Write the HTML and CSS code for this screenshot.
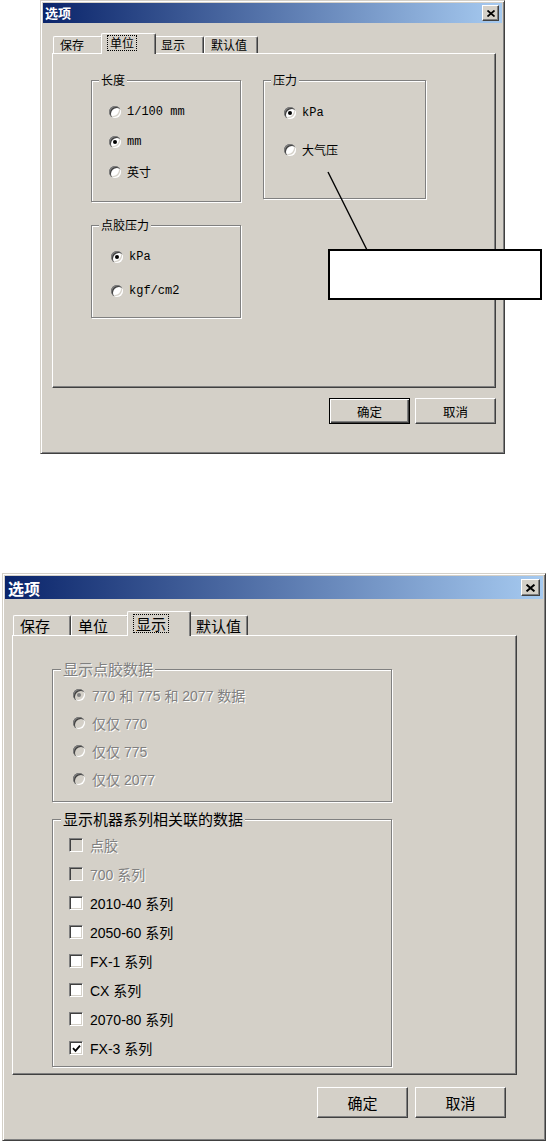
FILE: index.html
```html
<!DOCTYPE html>
<html lang="zh-CN">
  <head>
    <meta charset="UTF-8" />
    <meta name="viewport" content="width=device-width, initial-scale=1.0" />
    <title>选项</title>
    <link rel="stylesheet" href="styles.css">
  </head>
  <body>
    <main>
      <!-- first shot: units tab, with a blank callout -->
      <div class="figure">
        <div class="dialog dialog-small">
          <div class="titlebar">
            <span class="title">选项</span>
            <button class="close" aria-label="关闭">
              <svg viewBox="0 0 8 7" width="8" height="7"><path d="M0.5 0.5 L7.5 6.5 M7.5 0.5 L0.5 6.5" stroke="#000" stroke-width="1.7" fill="none"/></svg>
            </button>
          </div>
          <div class="dialog-body">
            <div class="tabs">
              <div class="tab">保存</div>
              <div class="tab tab-active"><span class="focus">单位</span></div>
              <div class="tab">显示</div>
              <div class="tab">默认值</div>
            </div>

            <div class="panel units-panel">
              <div class="group length-group">
                <div class="group-title">长度</div>
                <div class="options">
                  <label class="option"><span class="radio"></span>1/100 mm</label>
                  <label class="option"><span class="radio checked"></span>mm</label>
                  <label class="option"><span class="radio"></span>英寸</label>
                </div>
              </div>
              <div class="group pressure-group">
                <div class="group-title">压力</div>
                <div class="options">
                  <label class="option"><span class="radio checked"></span>kPa</label>
                  <label class="option"><span class="radio"></span>大气压</label>
                </div>
              </div>
              <div class="group glue-group">
                <div class="group-title">点胶压力</div>
                <div class="options">
                  <label class="option"><span class="radio checked"></span>kPa</label>
                  <label class="option"><span class="radio"></span>kgf/cm2</label>
                </div>
              </div>
            </div>

            <div class="buttons">
              <button class="btn btn-default">确定</button>
              <button class="btn">取消</button>
            </div>
          </div>
        </div>

        <svg class="callout-line" width="60" height="90" viewBox="0 0 60 90">
          <line x1="8" y1="7" x2="47" y2="85" stroke="#000" stroke-width="1.4"/>
        </svg>
        <div class="callout-box"></div>
      </div>

      <!-- second shot: display tab -->
      <div class="dialog dialog-large">
        <div class="titlebar">
          <span class="title">选项</span>
          <button class="close" aria-label="关闭">
            <svg viewBox="0 0 8 7" width="9" height="8"><path d="M0.5 0.5 L7.5 6.5 M7.5 0.5 L0.5 6.5" stroke="#000" stroke-width="1.7" fill="none"/></svg>
          </button>
        </div>
        <div class="dialog-body">
          <div class="tabs">
            <div class="tab">保存</div>
            <div class="tab">单位</div>
            <div class="tab tab-active"><span class="focus">显示</span></div>
            <div class="tab">默认值</div>
          </div>

          <div class="panel display-panel">
            <div class="group data-group">
              <div class="group-title disabled">显示点胶数据</div>
              <div class="options">
                <label class="option disabled"><span class="radio checked"></span>770 和 775 和 2077 数据</label>
                <label class="option disabled"><span class="radio"></span>仅仅 770</label>
                <label class="option disabled"><span class="radio"></span>仅仅 775</label>
                <label class="option disabled"><span class="radio"></span>仅仅 2077</label>
              </div>
            </div>
            <div class="group series-group">
              <div class="group-title">显示机器系列相关联的数据</div>
              <div class="options">
                <label class="option disabled"><span class="check"></span>点胶</label>
                <label class="option disabled"><span class="check"></span>700 系列</label>
                <label class="option"><span class="check"></span>2010-40 系列</label>
                <label class="option"><span class="check"></span>2050-60 系列</label>
                <label class="option"><span class="check"></span>FX-1 系列</label>
                <label class="option"><span class="check"></span>CX 系列</label>
                <label class="option"><span class="check"></span>2070-80 系列</label>
                <label class="option"><span class="check"><svg viewBox="0 0 9 9" width="9" height="9"><path d="M1 4.2 L3.5 6.8 L8 1.6" stroke="#000" stroke-width="1.8" fill="none"/></svg></span>FX-3 系列</label>
              </div>
            </div>
          </div>

          <div class="buttons">
            <button class="btn">确定</button>
            <button class="btn">取消</button>
          </div>
        </div>
      </div>
    </main>
  </body>
</html>
```

FILE: styles.css
```css
* {
  margin: 0;
  padding: 0;
  box-sizing: border-box;
}

body {
  background-color: #fff;
  font-family: "Noto Sans CJK SC", "Noto Sans", sans-serif;
  color: #000;
}

button {
  font: inherit;
  color: inherit;
}

.figure {
  position: relative;
}

/* window frame */
.dialog {
  background-color: #d4d0c8;
  border: 1px solid;
  border-color: #d4d0c8 #404040 #404040 #d4d0c8;
  box-shadow: inset 1px 1px #fff, inset -1px -1px #808080;
  padding: 2px;
  display: flex;
  flex-direction: column;
}

.dialog-small {
  margin-left: 40px;
  width: 465px;
  height: 454px;
  font-size: 12px;
}

.dialog-large {
  margin-top: 119px;
  margin-left: 2px;
  width: 544px;
  height: 568px;
  font-size: 15px;
}

.titlebar {
  display: flex;
  align-items: center;
  justify-content: space-between;
  background: linear-gradient(to right, #0a246a, #a6caf0);
  color: #fff;
  font-weight: 700;
  padding: 0 3px 0 2px;
}

.dialog-small .titlebar {
  height: 20px;
  line-height: 14px;
  font-size: 13px;
}

.dialog-large .titlebar {
  height: 23px;
  line-height: 18px;
  padding-left: 3px;
  font-size: 16px;
}

.close {
  display: grid;
  place-content: center;
  background-color: #d4d0c8;
  border: 1px solid;
  border-color: #fff #404040 #404040 #fff;
  box-shadow: inset -1px -1px #808080;
}

.dialog-small .close {
  width: 17px;
  height: 16px;
}

.dialog-large .close {
  width: 19px;
  height: 17px;
}

.dialog-body {
  display: flex;
  flex-direction: column;
}

.dialog-small .dialog-body {
  padding: 10px 0 0 9px;
}

.dialog-large .dialog-body {
  padding: 12px 0 0 7px;
}

/* tabs */
.tabs {
  display: flex;
  align-items: flex-end;
  padding-left: 1px;
}

.tab {
  position: relative;
  border: 1px solid;
  border-bottom: none;
  border-color: #fff #404040 #fff #fff;
  box-shadow: inset -1px 0 #808080;
  border-radius: 2px 2px 0 0;
  background-color: #d4d0c8;
  padding: 0 10px 0 6px;
  white-space: nowrap;
}

.dialog-small .tab {
  height: 17px;
  min-width: 50px;
  line-height: 15px;
}

.dialog-large .tab {
  height: 20px;
  min-width: 58px;
  line-height: 19px;
  padding-right: 6px;
}

.tab-active {
  z-index: 1;
  margin: 0 -2px -1px;
  padding-left: 6px;
}

.dialog-small .tab-active {
  height: 21px;
  min-width: 55px;
  padding-top: 1px;
}

.dialog-large .tab-active {
  height: 25px;
  min-width: 64px;
  padding-top: 2px;
}

.focus {
  display: inline-block;
  outline: 1px dotted #000;
  padding: 0 2px;
  line-height: 14px;
}

.dialog-large .focus {
  line-height: 17px;
}

/* tab page */
.panel {
  border: 1px solid;
  border-color: #fff #404040 #404040 #fff;
  box-shadow: inset -1px -1px #808080;
}

.units-panel {
  width: 444px;
  height: 335px;
  padding: 26px 0 0 38px;
  display: grid;
  grid-template-columns: 150px 163px;
  grid-template-rows: 122px 93px;
  column-gap: 22px;
  row-gap: 23px;
  align-items: start;
}

.display-panel {
  width: 505px;
  height: 440px;
  padding: 33px 0 0 39px;
  display: flex;
  flex-direction: column;
  gap: 17px;
}

/* group boxes */
.group {
  border: 1px solid #808080;
  box-shadow: inset 1px 1px #fff, 1px 1px #fff;
  display: flex;
  flex-direction: column;
}

.group-title {
  width: fit-content;
  background-color: #d4d0c8;
  position: relative;
}

.dialog-small .group-title {
  margin: -8px 0 0 7px;
  padding: 0 2px;
  line-height: 14px;
}

.dialog-large .group-title {
  margin: -10px 0 0 8px;
  padding: 0 2px;
  line-height: 18px;
}

.options {
  display: flex;
  flex-direction: column;
}

.option {
  display: flex;
  align-items: center;
  height: 16px;
  white-space: pre;
}

.dialog-small .option {
  gap: 6px;
  font-family: "Liberation Mono", "Noto Sans CJK SC", monospace;
  font-size: 12px;
}

.dialog-large .option {
  gap: 7px;
  font-family: "Liberation Sans", "Noto Sans CJK SC", sans-serif;
  font-size: 14px;
}

.length-group {
  height: 122px;
}

.length-group .options {
  padding: 17px 0 0 17px;
  gap: 14px;
}

.pressure-group {
  height: 119px;
}

.pressure-group .options {
  padding: 18px 0 0 20px;
  gap: 21px;
}

.glue-group {
  height: 93px;
}

.glue-group .options {
  padding: 17px 0 0 19px;
  gap: 18px;
}

.data-group {
  width: 340px;
  height: 133px;
}

.data-group .options {
  padding: 9px 0 0 20px;
  gap: 12px;
}

.series-group {
  width: 340px;
  height: 248px;
}

.series-group .options {
  padding: 9px 0 0 16px;
  gap: 13px;
}

.disabled {
  color: #808080;
  text-shadow: 1px 1px #fff;
}

/* radio and check boxes */
.radio {
  flex: none;
  position: relative;
  width: 12px;
  height: 12px;
  border-radius: 50%;
  background-color: #fff;
  box-shadow: inset 1px 1px #808080, inset 2px 2px #404040,
    inset -1px -1px #fff, inset -2px -2px #d4d0c8;
}

.radio.checked::after {
  content: "";
  position: absolute;
  left: 4px;
  top: 4px;
  width: 4px;
  height: 4px;
  border-radius: 50%;
  background-color: #000;
}

.disabled .radio {
  background-color: #d4d0c8;
}

.disabled .radio.checked::after {
  background-color: #808080;
}

.check {
  flex: none;
  display: grid;
  place-content: center;
  width: 14px;
  height: 14px;
  background-color: #fff;
  border: 1px solid;
  border-color: #808080 #fff #fff #808080;
  box-shadow: inset 1px 1px #404040, inset -1px -1px #d4d0c8;
}

.check svg {
  display: block;
}

.disabled .check {
  background-color: #d4d0c8;
}

/* push buttons */
.buttons {
  display: flex;
  justify-content: flex-end;
}

.dialog-small .buttons {
  width: 444px;
  margin-top: 10px;
  gap: 5px;
}

.dialog-large .buttons {
  width: 494px;
  margin-top: 12px;
  gap: 7px;
}

.btn {
  background-color: #d4d0c8;
  border: 1px solid;
  border-color: #fff #404040 #404040 #fff;
  box-shadow: inset -1px -1px #808080;
}

.dialog-small .btn {
  width: 81px;
  height: 26px;
  font-size: 12.5px;
}

.dialog-large .btn {
  width: 91px;
  height: 31px;
  font-size: 15px;
}

.btn-default {
  border-color: #000;
  box-shadow: inset 1px 1px #fff, inset -1px -1px #404040,
    inset -2px -2px #808080;
}

/* callout drawn over the first shot */
.callout-line {
  position: absolute;
  left: 320px;
  top: 165px;
}

.callout-box {
  position: absolute;
  left: 328px;
  top: 249px;
  width: 214px;
  height: 51px;
  background-color: #fff;
  border: 2px solid #000;
}
```
